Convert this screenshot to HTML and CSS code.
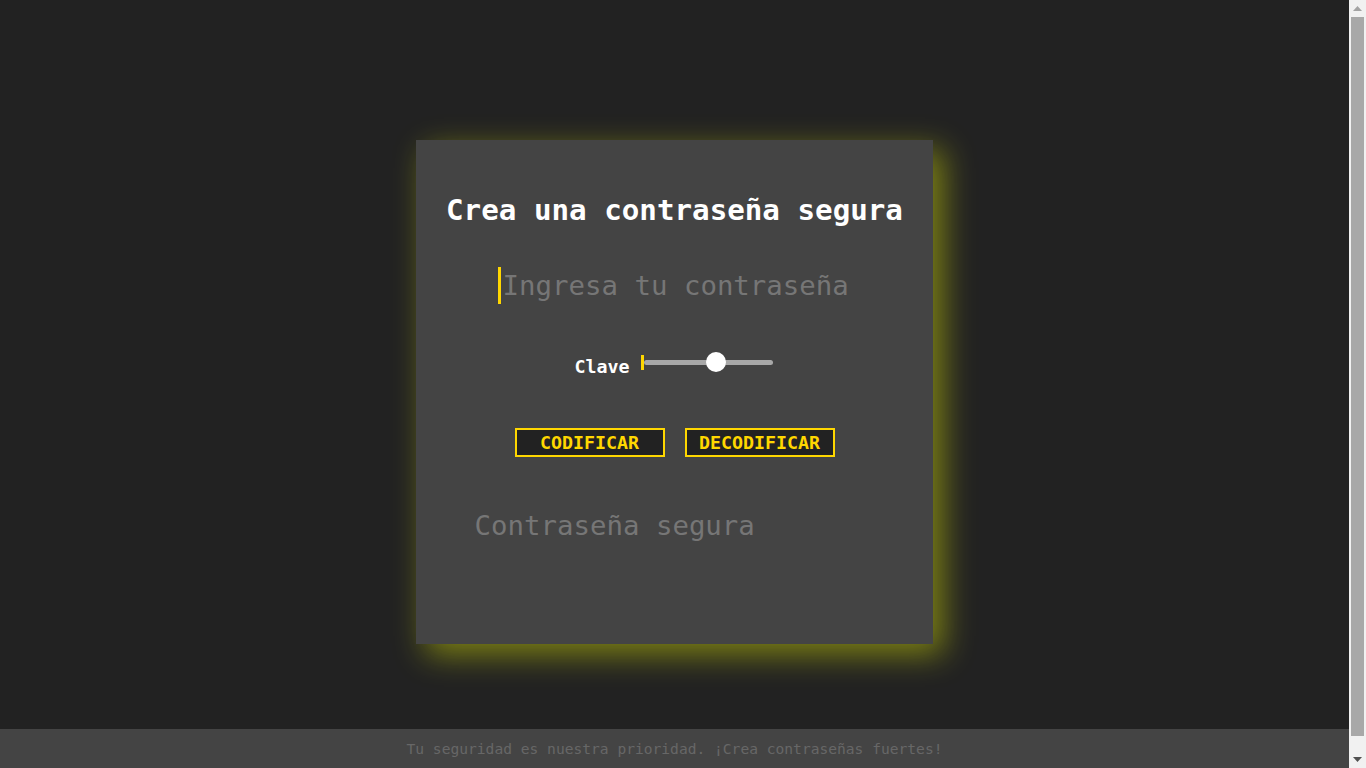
FILE: index.html
```html
<!DOCTYPE html>
<html lang="es">
<head>
<meta charset="utf-8">
<title>Crea una contraseña segura</title>
<link rel="stylesheet" href="styles.css">
</head>
<body>
<main class="main">
  <section class="card">
    <h1 class="title">Crea una contraseña segura</h1>
    <input class="text-input" type="text" placeholder="Ingresa tu contraseña">
    <div class="key-row">
      <label class="key-label" for="clave">Clave</label>
      <input class="range" id="clave" type="range" min="0" max="100" value="57">
    </div>
    <div class="buttons">
      <button class="btn">CODIFICAR</button>
      <button class="btn">DECODIFICAR</button>
    </div>
    <textarea class="output" placeholder="Contraseña segura" readonly></textarea>
  </section>
</main>
<footer class="footer">Tu seguridad es nuestra prioridad. ¡Crea contraseñas fuertes!</footer>
<div class="scrollbar" aria-hidden="true">
  <div class="sb-btn"><svg width="9" height="5" viewBox="0 0 9 5"><path d="M0 5 L4.5 0 L9 5 Z" fill="#a3a3a3"/></svg></div>
  <div class="sb-track"><div class="sb-thumb"></div></div>
  <div class="sb-btn"><svg width="9" height="5" viewBox="0 0 9 5"><path d="M0 0 L9 0 L4.5 5 Z" fill="#505050"/></svg></div>
</div>
</body>
</html>
```

FILE: styles.css
```css
* { box-sizing: border-box; }

html, body {
  margin: 0;
  padding: 0;
  background: #222222;
  font-family: "DejaVu Sans Mono", "Liberation Mono", monospace;
}

body {
  padding-right: 17px;
}

.scrollbar {
  position: fixed;
  top: 0;
  right: 0;
  width: 17px;
  height: 100vh;
  background: #f1f1f1;
  display: flex;
  flex-direction: column;
}

.sb-btn {
  height: 17px;
  display: flex;
  align-items: center;
  justify-content: center;
}

.sb-track {
  flex: 1;
  padding: 0 2px 15px;
  display: flex;
}

.sb-thumb {
  flex: 1;
  background: #a8a8a8;
}

.main {
  height: 729px;
  display: flex;
  flex-direction: column;
  align-items: center;
  padding-top: 140px;
}

.card {
  width: 517px;
  height: 504px;
  background: #444444;
  box-shadow: 10px 10px 30px rgba(245, 255, 0, 0.44);
  display: flex;
  flex-direction: column;
  align-items: center;
  padding-top: 50px;
}

.title {
  margin: 0;
  font-size: 29.2px;
  line-height: 40px;
  font-weight: bold;
  color: #ffffff;
  white-space: nowrap;
}

.text-input {
  margin-top: 37px;
  width: 354px;
  height: 37px;
  padding: 0 0 0 2px;
  border: none;
  border-left: 3px solid #ffd700;
  background: transparent;
  outline: none;
  color: #ffffff;
  font-family: inherit;
  font-size: 27.4px;
}

.text-input::placeholder,
.output::placeholder {
  color: #767676;
}

.key-row {
  margin-top: 50px;
  height: 24px;
  display: flex;
  align-items: center;
  gap: 11px;
  margin-right: 2px;
}

.key-label {
  color: #ffffff;
  font-size: 18.3px;
  font-weight: bold;
  line-height: 24px;
  padding-top: 2px;
}

.range {
  -webkit-appearance: none;
  appearance: none;
  margin: 0 0 8px 0;
  width: 132px;
  height: 15px;
  padding: 0;
  background: transparent;
  border: none;
  border-left: 3px solid #ffd700;
  outline: none;
}

.range::-webkit-slider-runnable-track {
  height: 5px;
  background: #a8a8a8;
  border-radius: 3px;
}

.range::-webkit-slider-thumb {
  -webkit-appearance: none;
  appearance: none;
  width: 20px;
  height: 20px;
  margin-top: -7.5px;
  border-radius: 50%;
  background: #ffffff;
  border: none;
}

.buttons {
  margin-top: 50px;
  display: flex;
  gap: 20px;
}

.btn {
  width: 150px;
  height: 29px;
  padding: 0;
  background: #222222;
  border: 2px solid #ffd700;
  color: #ffd700;
  font-family: inherit;
  font-size: 18.3px;
  font-weight: bold;
  line-height: 25px;
  cursor: pointer;
}

.output {
  margin-top: 52px;
  width: 400px;
  height: 100px;
  padding: 0;
  border: none;
  background: transparent;
  outline: none;
  resize: none;
  color: #ffffff;
  font-family: inherit;
  font-size: 27.4px;
  line-height: 34px;
}

.footer {
  background: #444444;
  color: #676767;
  font-size: 14.6px;
  line-height: 19px;
  text-align: center;
  padding: 10px 0 26px;
  margin-right: -17px;
  padding-right: 17px;
}
```
